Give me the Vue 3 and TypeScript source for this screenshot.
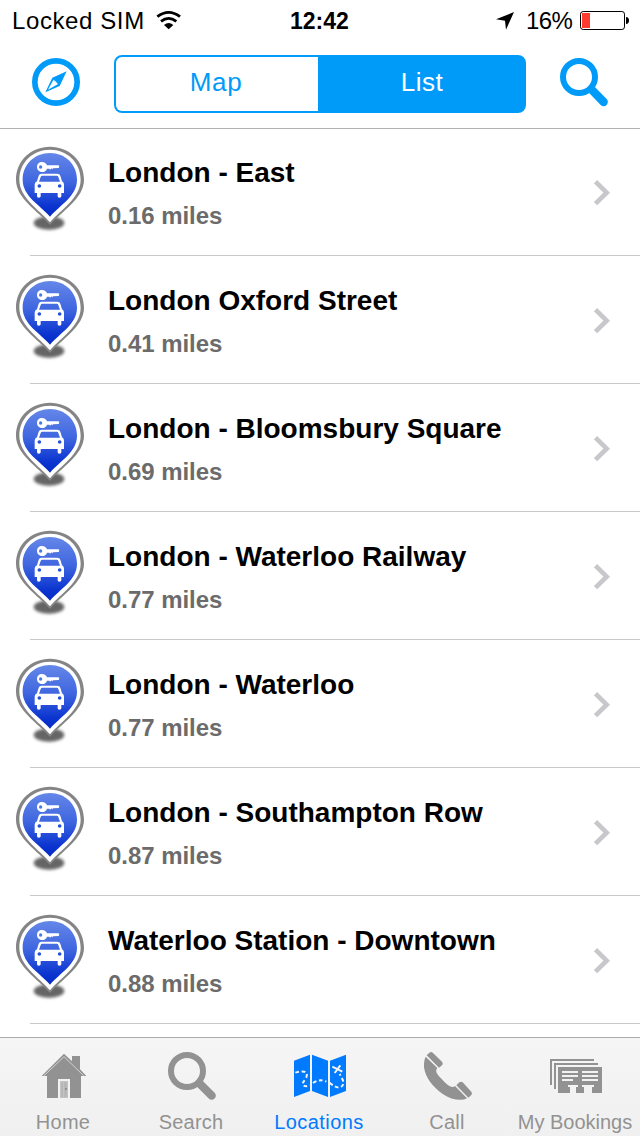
<script setup lang="ts">
import { ref } from 'vue'

interface Place { name: string; distance: string }
interface Tab { id: string; label: string; box: string }

const view = ref<'map' | 'list'>('list')
const activeTab = ref('locations')

const places: Place[] = [
  { name: 'London - East', distance: '0.16 miles' },
  { name: 'London Oxford Street', distance: '0.41 miles' },
  { name: 'London - Bloomsbury Square', distance: '0.69 miles' },
  { name: 'London - Waterloo Railway', distance: '0.77 miles' },
  { name: 'London - Waterloo', distance: '0.77 miles' },
  { name: 'London - Southampton Row', distance: '0.87 miles' },
  { name: 'Waterloo Station - Downtown', distance: '0.88 miles' },
]

const tabs: Tab[] = [
  { id: 'home', label: 'Home', box: '111 111 156 144' },
  { id: 'search', label: 'Search', box: '495 111 156 144' },
  { id: 'locations', label: 'Locations', box: '159 111 156 144' },
  { id: 'call', label: 'Call', box: '63 111 156 144' },
  { id: 'bookings', label: 'My Bookings', box: '447 111 156 144' },
]
</script>

<template>
  <div class="screen">
    <svg class="defs" width="0" height="0" aria-hidden="true">
      <defs>
        <linearGradient id="pin-fill" x1="0" y1="0" x2="0" y2="1">
          <stop offset="0" stop-color="#6487e8" />
          <stop offset="0.45" stop-color="#3f66df" />
          <stop offset="0.85" stop-color="#0932cf" />
          <stop offset="1" stop-color="#062bc4" />
        </linearGradient>
        <filter id="pin-blur" x="-30%" y="-50%" width="160%" height="200%">
          <feGaussianBlur stdDeviation="5" />
        </filter>
        <filter id="edge-blur"><feGaussianBlur stdDeviation="2" /></filter>
      </defs>
    </svg>

    <header class="top">
      <div class="status">
        <span class="carrier">Locked SIM</span>
        <svg class="wifi" viewBox="468 30 78 60" width="26" height="20">
          <g fill="none" stroke="#000" stroke-width="8.5">
            <path d="M472 50 Q506 24 540 50" />
            <path d="M483 64 Q506 46 529 64" />
          </g>
          <path d="M492 75 Q506 63 520 75 L506 88 Z" />
        </svg>
        <span class="clock">12:42</span>
        <svg class="arrow" viewBox="528 36 54 54" width="18" height="18">
          <path d="M582 36 L528 58 L555 62 L558 89 Z" />
        </svg>
        <span class="percent">16%</span>
        <svg class="battery" viewBox="780 33 150 57" width="50" height="19">
          <rect x="781.5" y="34.5" width="132" height="54" rx="8" fill="#fff" stroke="#000" stroke-width="3" />
          <rect x="786" y="39" width="24" height="45" fill="#ff3b30" />
          <path d="M918 51 Q927 52 927 61.500 Q927 71 918 72 Z" />
        </svg>
      </div>

      <div class="toolbar">
        <svg class="compass" viewBox="96 174 144 144" width="48" height="48">
          <circle cx="168" cy="246" r="63.500" fill="none" stroke="#009bf9" stroke-width="17" />
          <path fill="#009bf9" fill-rule="evenodd" d="M200 214 L157 233 L136 277 L179 258 Z M160 240 L173 253 L144 269 Z" />
          <path fill="#fff" d="M160 238 L168 245 L175 254 L168 250 Z" />
        </svg>
        <div class="segments">
          <button :class="['segment', { on: view === 'map' }]" @click="view = 'map'">Map</button>
          <button :class="['segment', { on: view === 'list' }]" @click="view = 'list'">List</button>
        </div>
        <svg class="find" viewBox="720 174 144 144" width="48" height="48">
          <g fill="none" stroke="#009bf9">
            <circle cx="777" cy="231" r="48" stroke-width="18" />
            <path d="M815 269 L851 306" stroke-width="25" stroke-linecap="round" />
          </g>
        </svg>
      </div>
    </header>

    <main class="list">
      <article v-for="place in places" :key="place.name" class="row">
        <svg class="pin" viewBox="48 33 204 258" width="68" height="86">
          <ellipse cx="147" cy="264" rx="46" ry="20" fill="#333" opacity="0.75" filter="url(#pin-blur)" />
          <path d="M150 270 C115 228 48 191 48 134 C48 76 94 35 150 35 C206 35 252 76 252 134 C252 191 185 228 150 270 Z" fill="#858585" filter="url(#edge-blur)" />
          <path d="M150 262 C117 223 58 188 58 134 C58 82 99 44 150 44 C201 44 242 82 242 134 C242 188 183 223 150 262 Z" fill="#fff" />
          <path d="M150 245 C121 210 68 184 68 134 C68 88 104 54 150 54 C196 54 231 88 231 134 C231 184 179 210 150 245 Z" fill="url(#pin-fill)" />
          <g fill="#fff">
            <path fill-rule="evenodd" d="M126 81 C134 81 139 85 141 91 L176 91 Q180 95 176 99 L159 100 L157 103 L154 100 L151 104 L148 101 L141 101 C139 108 133 111 126 111 C117 111 111 104 111 96 C111 87 117 81 126 81 Z M122 91 A5 5 0 1 0 122 101 A5 5 0 1 0 122 91 Z" />
            <path fill-rule="evenodd" d="M125 116 H172 Q179 116 181 122 L186 139 Q192 142 192 149 V174 H184 V184 Q184 188 178 188 Q173 188 173 184 V174 H122 V184 Q122 188 116 188 Q111 188 111 184 V174 H104 V149 Q104 142 111 139 L116 122 Q118 116 125 116 Z M127 122 Q123 122 122 126 L117 140 H180 L175 126 Q174 122 170 122 Z" />
          </g>
          <circle cx="118" cy="153" r="5.500" fill="#2550d8" />
          <circle cx="179" cy="153" r="5.500" fill="#2550d8" />
        </svg>
        <div class="info">
          <h2>{{ place.name }}</h2>
          <p>{{ place.distance }}</p>
        </div>
        <svg class="chevron" viewBox="102 90 48 78" width="16" height="26">
          <path d="M106.500 95 L140 128 L106.500 161" fill="none" stroke="#c7c7cc" stroke-width="14" />
        </svg>
      </article>
    </main>

    <nav class="tabbar">
      <button v-for="tab in tabs" :key="tab.id" :class="['tab', tab.id, { active: tab.id === activeTab }]" @click="activeTab = tab.id">
        <svg :viewBox="tab.box" width="52" height="48" fill="currentColor">
          <template v-if="tab.id === 'home'">
            <path d="M192 116 L216 139 V123 H240 V163 L259 183 H243 V249 H141 V183 H125 Z" />
            <path d="M132 182 L192 125 L251 182" fill="none" stroke="#dedede" stroke-width="2.500" />
            <path d="M174 249 V192 H210 V249 Z" fill="#f2f2f2" />
            <path d="M180 198 H204 V249 H180 Z" fill="#c3c3c3" />
            <path d="M184 202 H189 V246 H184 Z M193 202 H200 V246 H193 Z" fill="#b5b5b5" />
            <rect x="195" y="219" width="6" height="6" />
          </template>
          <g v-else-if="tab.id === 'search'" fill="none" stroke="currentColor">
            <circle cx="561" cy="168" r="48" stroke-width="18" />
            <path d="M599 206 L635 242" stroke-width="25" stroke-linecap="round" />
          </g>
          <template v-else-if="tab.id === 'locations'">
            <path d="M162 137 L210 119 V228 L162 246 Z M216 119 L264 137 V246 L216 228 Z M270 137 L318 119 V228 L270 246 Z" />
            <g fill="none" stroke="#f5f5f5" stroke-width="6">
              <path d="M166 173 Q181 168 193 170 Q204 174 199 187 C193 199 184 205 190 211 Q198 216 210 211 M219 204 Q240 190 259 200" stroke-dasharray="11 8" />
              <path d="M269 203 Q287 220 301 217 Q314 211 308 194 L299 177" stroke-dasharray="11 8" />
              <path d="M277 155 L307 170 M301 151 L284 174" />
            </g>
          </template>
          <template v-else-if="tab.id === 'call'">
            <path d="M77 125 L112 159 C103 168 113 180 125 192 C139 207 154 222 165 213 L201 250 C183 259 155 255 127 236 C98 216 76 188 72 157 Q71 137 77 125 Z" />
            <path d="M80 121 L88 113 Q94 109 99 114 L126 140 Q131 146 126 151 L117 158 Z M169 211 L178 202 Q183 198 188 202 L214 230 Q218 235 214 240 L205 248 Z" />
          </template>
          <template v-else>
            <path d="M450 132 H582 V138 H456 V210 H450 Z M462 144 H594 V150 H468 V222 H462 Z M474 156 H606 V234 H576 V216 H582 V210 H546 V216 H552 V234 H528 V216 H534 V210 H504 V216 H510 V234 H474 Z" />
            <path d="M486 168 H534 V174 H486 Z M486 180 H534 V186 H486 Z M486 192 H519 V198 H486 Z M546 168 H594 V174 H546 Z M546 180 H594 V186 H546 Z M546 192 H594 V198 H546 Z" fill="#f2f2f2" />
          </template>
        </svg>
        <span>{{ tab.label }}</span>
      </button>
    </nav>
  </div>
</template>

<style>
body { margin: 0; background: #fff; }
</style>

<style scoped>
.screen {
  width: 640px; height: 1136px; overflow: hidden; background: #fff;
  display: flex; flex-direction: column;
  font-family: "Liberation Sans", Arial, sans-serif; color: #000;
}
.defs { position: absolute; }
svg { display: block; flex: none; overflow: visible; }
button { border: 0; padding: 0; margin: 0; background: none; font-family: inherit; color: inherit; }
.top { flex: none; height: 128px; border-bottom: 1px solid #b2b2b2; }
.status {
  height: 40px; display: grid;
  grid-template-columns: 156px 134px 206px 30px 54px 60px; align-items: start;
  font-size: 24px; line-height: 28px;
}
.carrier { padding: 7px 0 0 12px; letter-spacing: 0.6px; white-space: nowrap; }
.wifi { margin-top: 10px; }
.clock { padding-top: 7px; font-weight: bold; font-size: 23px; letter-spacing: 0; }
.arrow { margin-top: 12px; }
.percent { padding-top: 7px; letter-spacing: -0.6px; }
.battery { margin-top: 11px; }
.toolbar { height: 88px; display: flex; align-items: flex-start; }
.compass { margin: 18px 0 0 32px; }
.segments {
  box-sizing: border-box; width: 412px; height: 58px; margin: 15px 0 0 34px;
  border: 2px solid #009bf9; border-radius: 8px; display: flex; overflow: hidden; background: #009bf9;
}
.segment { box-sizing: border-box; width: 202px; height: 54px; padding-bottom: 4px; font-size: 26px; line-height: 50px; letter-spacing: 0.7px; color: #009bf9; background: #fff; }
.segment:first-child { padding-right: 2px; }
.segment:last-child { flex: 1; padding-left: 2px; letter-spacing: 0.5px; }
.segment.on { background: #009bf9; color: #fff; }
.find { margin: 18px 0 0 34px; }
.list { flex: none; margin-top: -1px; height: 909px; overflow: hidden; }
.row { height: 128px; display: flex; position: relative; padding-left: 16px; box-sizing: border-box; }
.row::after { content: ""; position: absolute; left: 30px; right: 0; bottom: 0; height: 1px; background: #c8c7cc; }
.pin { margin-top: 18px; }
.info { flex: 1; padding: 29px 0 0 24px; white-space: nowrap; }
h2 { margin: 0; font-size: 28px; line-height: 32px; font-weight: bold; }
p { margin: 13px 0 0; font-size: 24px; line-height: 28px; font-weight: bold; color: #6b6b6b; letter-spacing: -0.05px; }
.chevron { margin: 52px 30px 0 0; }
.tabbar {
  box-sizing: border-box; height: 99px; border-top: 1px solid #acacac;
  background: linear-gradient(#f5f5f5, #f0f0f0); display: flex;
}
.tab { width: 128px; flex: none; display: flex; flex-direction: column; align-items: center; padding-top: 14px; color: #929292; font-size: 20px; letter-spacing: 0.2px; }
.tab:first-child { margin-left: -1px; }
.tab.active { color: #007aff; }
.tab span { margin-top: 11px; line-height: 23px; white-space: nowrap; }
.tab.locations { letter-spacing: 0.45px; }
.tab.home { letter-spacing: 0.3px; }
.tab.bookings { letter-spacing: 0; }
</style>
